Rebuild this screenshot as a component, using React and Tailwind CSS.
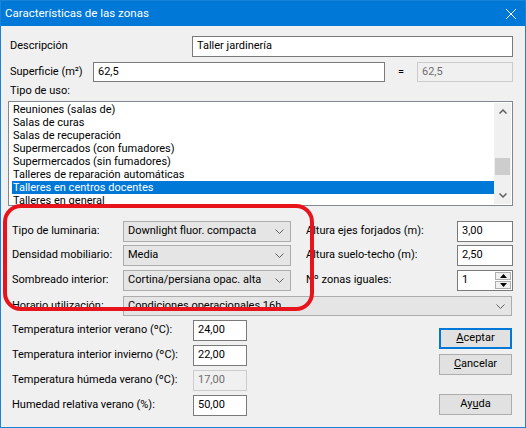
import { ChevronDown } from 'lucide-react'

const font = { fontFamily: 'Roboto, "Liberation Sans", sans-serif' }

const inputClass = "h-[21px] bg-white border border-[#7a7a7a] px-[4px] flex items-center text-[11px] text-black"
const disabledClass = "h-[21px] bg-[#f0f0f0] border border-[#cccccc] px-[4px] flex items-center text-[11px] text-[#6d6d6d]"
const comboClass = "h-[21px] bg-[#e5e5e5] border border-[#acacac] pl-[4px] pr-[6px] flex items-center justify-between text-[11px] text-black"
const buttonClass = "h-[21px] w-[73px] bg-[#e1e1e1] border border-[#adadad] flex items-center justify-center text-[11px] text-black"

const usos = [
    'Reuniones (salas de)',
    'Salas de curas',
    'Salas de recuperación',
    'Supermercados (con fumadores)',
    'Supermercados (sin fumadores)',
    'Talleres de reparación automáticas',
    'Talleres en centros docentes',
    'Talleres en general',
]

function Chevron() {
    return (
        <svg width="9" height="5" viewBox="0 0 9 5" className="shrink-0">
            <path d="M0.5 0.5 L4.5 4.5 L8.5 0.5" fill="none" stroke="#606060" strokeWidth="1" />
        </svg>
    )
}

function Combo({ value, className }) {
    return (
        <div className={`${comboClass} ${className}`}>
            <span className="whitespace-nowrap overflow-hidden">{value}</span>
            <Chevron />
        </div>
    )
}

export default function App() {
    return (
        <div className="w-[526px] h-[428px] bg-[#f0f0f0] border border-[#1883d7] flex flex-col relative overflow-hidden" style={font}>
            {/* title bar */}
            <div className="h-[25px] bg-[#0078d7] flex items-center justify-between pl-[4px] pr-[9px] shrink-0">
                <span className="text-white text-[11.5px]">Características de las zonas</span>
                <svg width="10" height="10" viewBox="0 0 10 10">
                    <path d="M0 0 L10 10 M10 0 L0 10" stroke="white" strokeWidth="1" />
                </svg>
            </div>

            <div className="flex flex-col pl-[7px] pr-[12px]">
                <div className="flex items-center mt-[10px] h-[21px]">
                    <span className="text-[11px] ml-[2px] flex-1">Descripción</span>
                    <div className={`${inputClass} w-[321px]`}>Taller jardinería</div>
                </div>

                <div className="flex items-center mt-[5px] h-[20px]">
                    <span className="text-[11px] ml-[2px] w-[83px]">Superficie (m²)</span>
                    <div className={`${inputClass} w-[292px] !h-[20px]`}>62,5</div>
                    <span className="w-[32px] text-center text-[11px]">=</span>
                    <div className={`${disabledClass} w-[96px] !h-[20px]`}>62,5</div>
                </div>

                <div className="mt-[2px] h-[14px] flex items-center">
                    <span className="text-[11px] ml-[2px]">Tipo de uso:</span>
                </div>

                <div className="mt-[3px] h-[105px] bg-white border border-[#828790] flex overflow-hidden">
                    <div className="flex-1 pl-[3px] pt-[1px] flex flex-col">
                        {usos.map((u, i) => (
                            <div
                                key={u}
                                className={`h-[13px] leading-[13px] pl-[1px] text-[11px] whitespace-nowrap shrink-0 ${i === 6 ? 'bg-[#0078d7] text-white' : 'text-black'}`}
                            >
                                {u}
                            </div>
                        ))}
                    </div>
                    <div className="w-[17px] my-[1px] mr-[1px] bg-[#f0f0f0] flex flex-col items-center justify-between">
                        <div className="h-[17px] flex items-center justify-center">
                            <svg width="8" height="5" viewBox="0 0 8 5">
                                <path d="M0.5 4.5 L4 1 L7.5 4.5" fill="none" stroke="#606060" strokeWidth="1.5" />
                            </svg>
                        </div>
                        <div className="w-[15px] h-[17px] bg-[#cdcdcd] mt-[38px]" />
                        <div className="flex-1" />
                        <div className="h-[17px] flex items-center justify-center">
                            <svg width="8" height="5" viewBox="0 0 8 5">
                                <path d="M0.5 0.5 L4 4 L7.5 0.5" fill="none" stroke="#606060" strokeWidth="1.5" />
                            </svg>
                        </div>
                    </div>
                </div>

                {/* combos + right fields */}
                <div className="flex items-center mt-[15px] h-[21px]">
                    <span className="text-[11px] pl-[4px] w-[115px]">Tipo de luminaria:</span>
                    <Combo value="Downlight fluor. compacta" className="w-[168px]" />
                    <span className="text-[11px] ml-[15px] flex-1">Altura ejes forjados (m):</span>
                    <div className={`${inputClass} w-[56px]`}>3,00</div>
                </div>
                <div className="flex items-center mt-[3px] h-[21px]">
                    <span className="text-[11px] pl-[4px] w-[115px]">Densidad mobiliario:</span>
                    <Combo value="Media" className="w-[168px]" />
                    <span className="text-[11px] ml-[15px] flex-1">Altura suelo-techo (m):</span>
                    <div className={`${inputClass} w-[56px]`}>2,50</div>
                </div>
                <div className="flex items-center mt-[4px] h-[21px]">
                    <span className="text-[11px] pl-[4px] w-[115px]">Sombreado interior:</span>
                    <Combo value="Cortina/persiana opac. alta" className="w-[168px]" />
                    <span className="text-[11px] ml-[15px] flex-1">Nº zonas iguales:</span>
                    <div className="h-[21px] w-[56px] bg-white border border-[#7a7a7a] flex items-stretch text-[11px]">
                        <span className="flex-1 pl-[4px] flex items-center">1</span>
                        <div className="w-[17px] flex flex-col gap-[1px] p-[1px] pl-0">
                            <div className="flex-1 bg-[#f0f0f0] border border-[#adadad] flex items-center justify-center">
                                <svg width="7" height="4" viewBox="0 0 7 4"><path d="M0 4 L3.5 0 L7 4 Z" fill="#000" /></svg>
                            </div>
                            <div className="flex-1 bg-[#f0f0f0] border border-[#adadad] flex items-center justify-center">
                                <svg width="7" height="4" viewBox="0 0 7 4"><path d="M0 0 L3.5 4 L7 0 Z" fill="#000" /></svg>
                            </div>
                        </div>
                    </div>
                </div>
                <div className="flex items-center mt-[5px] h-[20px]">
                    <span className="text-[11px] pl-[4px] w-[115px]">Horario utilización:</span>
                    <Combo value="Condiciones operacionales 16h" className="flex-1 !h-[20px] mr-[1px]" />
                </div>

                {/* bottom */}
                <div className="flex mt-[4px]">
                    <div className="flex flex-col gap-[4px]">
                        {[
                            ['Temperatura interior verano (ºC):', '24,00', false],
                            ['Temperatura interior invierno (ºC):', '22,00', false],
                            ['Temperatura húmeda verano (ºC):', '17,00', true],
                            ['Humedad relativa verano (%):', '50,00', false],
                        ].map(([label, value, disabled]) => (
                            <div key={label} className="flex items-center h-[21px]">
                                <span className="text-[11px] pl-[4px] w-[185px] text-black">{label}</span>
                                <div className={`${disabled ? disabledClass : inputClass} w-[54px]`}>{value}</div>
                            </div>
                        ))}
                    </div>
                    <div className="flex-1" />
                    <div className="flex flex-col pt-[8px] mr-[1px]">
                        <div className={`${buttonClass} !border-2 !border-[#0078d7]`}>
                            <span><span className="underline">A</span>ceptar</span>
                        </div>
                        <div className={`${buttonClass} mt-[5px]`}>
                            <span><span className="underline">C</span>ancelar</span>
                        </div>
                        <div className={`${buttonClass} mt-[19px]`}>
                            <span>Ay<span className="underline">u</span>da</span>
                        </div>
                    </div>
                </div>
            </div>

            {/* red annotation */}
            <div className="absolute left-[2px] top-[203px] w-[311px] h-[107px] border-[4px] border-[#e8141c] rounded-[18px] pointer-events-none" />
        </div>
    )
}
